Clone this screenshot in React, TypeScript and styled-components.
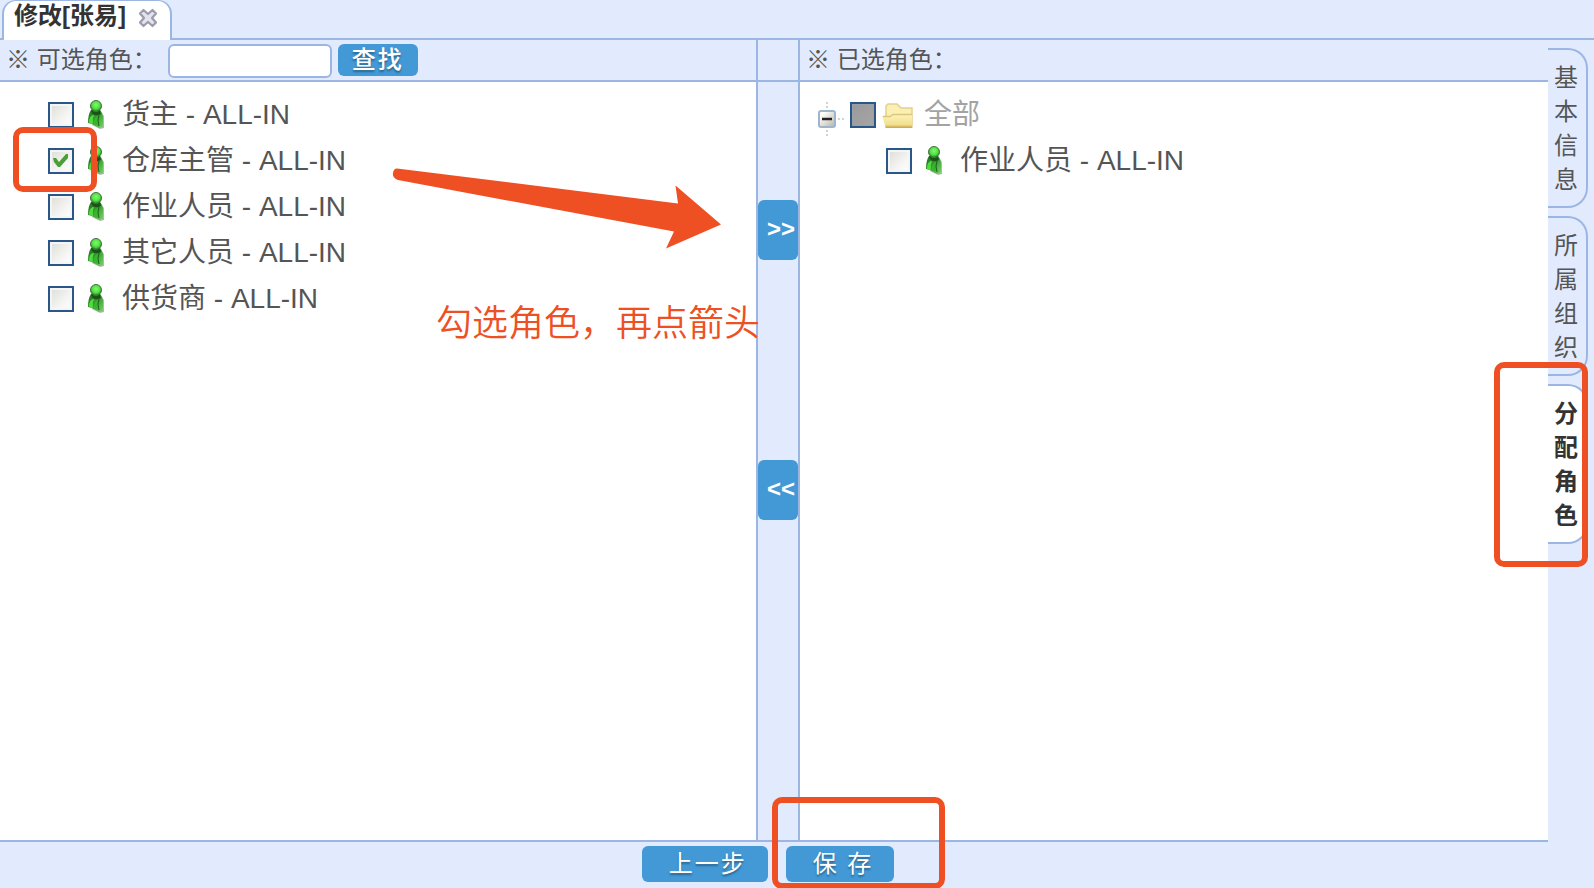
import React, { useState } from 'react';
import styled, { createGlobalStyle, css } from 'styled-components';

const color = {
  bar: '#e2ebfd',
  line: '#9cb6e4',
  button: '#4299d6',
  text: '#555555',
  strong: '#333333',
  mark: '#ee5024',
};

const GlobalStyle = createGlobalStyle`
  *, *::before, *::after { box-sizing: border-box; }
  body {
    margin: 0;
    background: ${color.bar};
    color: ${color.text};
    font-family: "Liberation Sans", "Noto Sans CJK SC", sans-serif;
    font-size: 24px;
  }
  button, input { font: inherit; }
`;

const Page = styled.div`
  display: flex;
  flex-direction: column;
  min-height: 100vh;
  overflow: hidden;
`;

const TabBar = styled.header`
  display: flex;
  height: 40px;
  padding-left: 2px;
  border-bottom: 2px solid ${color.line};
`;

const PageTab = styled.div`
  display: flex;
  align-items: flex-start;
  gap: 12px;
  height: 40px;
  padding: 0 12px 0 10px;
  border: 2px solid ${color.line};
  border-top-width: 1px;
  border-bottom: 0;
  border-radius: 14px 14px 0 0;
  background: #fff;
`;

const PageTitle = styled.h1`
  margin: 0;
  color: ${color.strong};
  font-size: 24px;
  font-weight: 700;
  line-height: 30px;
`;

const CloseButton = styled.button`
  display: flex;
  margin-top: 7px;
  padding: 0;
  border: 0;
  background: none;
`;

const Body = styled.div`
  display: flex;
  flex: 1;
`;

const Content = styled.div`
  display: flex;
  flex: 1;
  flex-direction: column;
  min-width: 0;
`;

const Columns = styled.main`
  display: grid;
  flex: 1;
  grid-template-columns: 189fr 44px 187fr;
  border-bottom: 2px solid ${color.line};
`;

const Panel = styled.section`
  display: flex;
  flex-direction: column;
  min-width: 0;
  background: #fff;
`;

const PanelHead = styled.div`
  display: flex;
  align-items: center;
  height: 42px;
  padding: 0 6px;
  border-bottom: 2px solid ${color.line};
  background: ${color.bar};
  line-height: 36px;
  white-space: pre;
`;

const SearchInput = styled.input`
  width: 164px;
  height: 34px;
  margin: 2px 6px 0 11px;
  padding: 0 6px;
  border: 2px solid ${color.line};
  border-radius: 6px;
  background: #fff;
  outline: 0;
`;

const Button = styled.button`
  height: 36px;
  padding: 0 21px 0 27px;
  border: 0;
  border-radius: 6px;
  background: ${color.button};
  color: #fff;
  letter-spacing: 2px;
  line-height: 36px;
  text-shadow: 0 2px 2px rgba(0, 0, 0, 0.35);
  white-space: nowrap;
`;

const SearchButton = styled(Button)`
  height: 32px;
  padding: 0 14px;
  font-weight: 500;
  line-height: 32px;
`;

const Transfer = styled.div`
  display: flex;
  flex-direction: column;
  border: solid ${color.line};
  border-width: 0 2px;
`;

const TransferHead = styled.div`
  height: 42px;
  border-bottom: 2px solid ${color.line};
`;

const TransferButtons = styled.div`
  display: flex;
  flex-direction: column;
  gap: 200px;
  padding-top: 118px;
`;

const MoveButton = styled.button`
  height: 60px;
  padding: 0 0 2px 9px;
  border: 0;
  border-radius: 6px;
  background: ${color.button};
  color: #fff;
  font-weight: 700;
  line-height: 58px;
  text-align: left;
`;

const Tree = styled.ul`
  position: relative;
  margin: 0;
  padding: 10px 0 0;
  list-style: none;
`;

const Row = styled.li<{ $indent: number }>`
  position: relative;
  display: flex;
  align-items: center;
  height: 46px;
  padding-left: ${(p) => p.$indent}px;
`;

const RowLabel = styled.label<{ $muted?: boolean }>`
  display: flex;
  align-items: center;
  gap: 10px;
  color: ${(p) => (p.$muted ? '#a3a3a3' : color.text)};
  font-size: 28px;
  line-height: 42px;
  white-space: nowrap;
`;

const Check = styled.input<{ $partial?: boolean }>`
  appearance: none;
  flex: none;
  width: 26px;
  height: 26px;
  margin: 0 6px 0 0;
  border: 2px solid #2b5688;
  background: linear-gradient(135deg, #dcdcd7, #f4f4f2 60%, #ffffff);
  box-shadow: inset 0 0 0 2px #f4f5f6;
  ${(p) =>
    p.$partial &&
    css`
      background: linear-gradient(135deg, #999, #a6a6a6);
      box-shadow: inset 0 0 0 1px #9aa0a8;
    `}
  &:checked::after {
    content: '';
    display: block;
    width: 22px;
    height: 22px;
    background: #4aa036;
    clip-path: polygon(3px 8px, 6px 8px, 9px 12px, 16px 4px, 18px 4px, 18px 8px, 10px 17px, 8px 17px, 4px 12px);
  }
`;

const IconSlot = styled.span`
  display: flex;
  width: 32px;
  height: 32px;
`;

const SideTabs = styled.nav`
  display: flex;
  flex-direction: column;
  gap: 8px;
  position: relative;
  width: 46px;
  padding: 8px 6px 0 0;
`;

const SideTab = styled.button<{ $active?: boolean }>`
  padding: 11px 8px 9px 6px;
  border: 2px solid ${color.line};
  border-left: 0;
  border-radius: 0 20px 20px 0;
  background: ${(p) => (p.$active ? '#fff' : color.bar)};
  color: ${(p) => (p.$active ? color.strong : color.text)};
  font-weight: ${(p) => (p.$active ? 700 : 400)};
  line-height: 34px;
  word-break: break-all;
`;

const Footer = styled.footer`
  display: flex;
  justify-content: center;
  gap: 18px;
  height: 46px;
  padding: 4px 12px 0 0;
`;

const SaveArea = styled.div`
  position: relative;
`;

const Mark = styled.span`
  position: absolute;
  z-index: 2;
  border: 6px solid ${color.mark};
  border-radius: 10px;
  pointer-events: none;
`;

const CheckMark = styled(Mark)`
  top: -11px;
  left: 13px;
  width: 84px;
  height: 65px;
`;

const SaveMark = styled(Mark)`
  top: -49px;
  left: -14px;
  width: 173px;
  height: 92px;
`;

const SideMark = styled(Mark)`
  top: 322px;
  right: 6px;
  width: 94px;
  height: 205px;
`;

const Arrow = styled.svg`
  position: absolute;
  z-index: 2;
  top: 82px;
  left: 390px;
  pointer-events: none;
`;

const Hint = styled.p`
  position: absolute;
  z-index: 2;
  top: 210px;
  left: 436px;
  margin: 0;
  color: ${color.mark};
  font-family: "Noto Sans CJK SC", sans-serif;
  font-size: 36px;
  font-weight: 350;
  line-height: 56px;
  white-space: nowrap;
`;

const CloseIcon = () => (
  <svg width="20" height="20" viewBox="0 0 20 20" aria-hidden="true">
    <path
      d="M5.500 2 10 6 14.500 2 18 5.500 14 10 18 14.500 14.500 18 10 14 5.500 18 2 14.500 6 10 2 5.500Z"
      fill="#e2e3ec"
      stroke="#9a9cac"
      strokeWidth="2.200"
      strokeLinejoin="round"
    />
  </svg>
);

const PersonIcon = () => (
  <svg width="32" height="32" viewBox="0 0 32 32" aria-hidden="true">
    <defs>
      <radialGradient id="head" cx="0.5" cy="0.4" r="0.6">
        <stop offset="0" stopColor="#7dfb6c" />
        <stop offset="0.6" stopColor="#4fe040" />
        <stop offset="1" stopColor="#217a1c" />
      </radialGradient>
      <linearGradient id="coat" x1="0" y1="0" x2="1" y2="1">
        <stop offset="0" stopColor="#1d6a1a" />
        <stop offset="0.5" stopColor="#35a02c" />
        <stop offset="1" stopColor="#7fd072" />
      </linearGradient>
    </defs>
    <path d="M11 12h9l4 5v12l-4 1-8-4z" fill="#7f887c" opacity="0.6" />
    <path d="M11 11h9q3 3 3 8v9l-4 1-7-4-4-1q0-9 3-13Z" fill="url(#coat)" />
    <path d="M11 11h9l1 4q-6 3-9-1Z" fill="#1b5218" />
    <path d="M9 24q0-8 5-8-2 4-1 9Z" fill="#4fdc40" />
    <path d="M14 25q-1-6 4-8-2 5 1 10Z" fill="#37b52c" />
    <path d="M19 16q-2 5 0 11" fill="none" stroke="#1f5f1b" strokeWidth="1" />
    <circle cx="16" cy="7" r="5.500" fill="url(#head)" stroke="#4a7046" strokeWidth="1" />
  </svg>
);

const FolderIcon = () => (
  <svg width="32" height="32" viewBox="0 0 32 32" aria-hidden="true">
    <defs>
      <linearGradient id="folder" x1="0" y1="0" x2="0" y2="1">
        <stop offset="0" stopColor="#fdf4bb" />
        <stop offset="0.75" stopColor="#f3e08f" />
        <stop offset="1" stopColor="#c9a348" />
      </linearGradient>
    </defs>
    <path d="M4 28V7l2-2h9l4 4h11v19Z" fill="#fbf0b4" stroke="#e3cf8c" strokeWidth="1.500" />
    <path d="M0 17h8l3-2h19v14H4Z" fill="url(#folder)" />
    <path d="M1 17.500h7l3-2h19" fill="none" stroke="#dcc67c" strokeWidth="1.500" />
  </svg>
);

const ExpanderButton = styled.button`
  display: flex;
  padding: 0;
  border: 0;
  background: none;
`;

const ExpanderIcon = () => (
  <svg width="40" height="46" viewBox="0 0 40 46" aria-hidden="true">
    <defs>
      <linearGradient id="knob" x1="0" y1="0" x2="1" y2="1">
        <stop offset="0.2" stopColor="#ffffff" />
        <stop offset="1" stopColor="#b9b0a2" />
      </linearGradient>
    </defs>
    <path d="M17 10v6M17 38v6M28 27h6" stroke="#d2d2d2" strokeWidth="2" strokeDasharray="2 2" />
    <rect x="9" y="19" width="16" height="16" rx="2" fill="url(#knob)" stroke="#9db6cd" strokeWidth="2" />
    <path d="M12 27h10" stroke="#222" strokeWidth="2.500" />
  </svg>
);

const available = ['货主', '仓库主管', '作业人员', '其它人员', '供货商'];

export default function App() {
  const [checked, setChecked] = useState<string[]>(['仓库主管']);
  const toggle = (name: string) =>
    setChecked((list) => (list.includes(name) ? list.filter((n) => n !== name) : [...list, name]));

  return (
    <Page>
      <GlobalStyle />
      <TabBar>
        <PageTab>
          <PageTitle>修改[张易]</PageTitle>
          <CloseButton type="button" aria-label="关闭">
            <CloseIcon />
          </CloseButton>
        </PageTab>
      </TabBar>
      <Body>
        <Content>
          <Columns>
            <Panel>
              <PanelHead>
                <label htmlFor="role-search">※ 可选角色：</label>
                <SearchInput id="role-search" type="text" />
                <SearchButton type="button">查找</SearchButton>
              </PanelHead>
              <Tree>
                {available.map((name, i) => (
                  <Row key={name} $indent={48}>
                    <Check
                      type="checkbox"
                      id={`role-${i}`}
                      checked={checked.includes(name)}
                      onChange={() => toggle(name)}
                    />
                    <RowLabel htmlFor={`role-${i}`}>
                      <IconSlot>
                        <PersonIcon />
                      </IconSlot>
                      {name} - ALL-IN
                    </RowLabel>
                    {i === 1 && <CheckMark />}
                  </Row>
                ))}
                <Hint as="li">勾选角色，再点箭头</Hint>
                <li aria-hidden="true">
                  <Arrow width="336" height="90" viewBox="0 0 336 90">
                    <path
                      d="M7 4.500 288 39.500 285.500 21.500 331 60.500 276 84.500 284 67.500 8 16Q2 14 3 9 3.500 4.500 7 4.500Z"
                      fill={color.mark}
                    />
                  </Arrow>
                </li>
              </Tree>
            </Panel>
            <Transfer>
              <TransferHead />
              <TransferButtons>
                <MoveButton type="button">&gt;&gt;</MoveButton>
                <MoveButton type="button">&lt;&lt;</MoveButton>
              </TransferButtons>
            </Transfer>
            <Panel>
              <PanelHead>※ 已选角色：</PanelHead>
              <Tree>
                <Row $indent={10}>
                  <ExpanderButton type="button" aria-label="折叠">
                    <ExpanderIcon />
                  </ExpanderButton>
                  <Check type="checkbox" id="role-all" $partial />
                  <RowLabel htmlFor="role-all" $muted>
                    <IconSlot>
                      <FolderIcon />
                    </IconSlot>
                    全部
                  </RowLabel>
                </Row>
                <Row $indent={86}>
                  <Check type="checkbox" id="role-worker" />
                  <RowLabel htmlFor="role-worker">
                    <IconSlot>
                      <PersonIcon />
                    </IconSlot>
                    作业人员 - ALL-IN
                  </RowLabel>
                </Row>
              </Tree>
            </Panel>
          </Columns>
          <Footer>
            <Button type="button">上一步</Button>
            <SaveArea>
              <Button type="button">保 存</Button>
              <SaveMark />
            </SaveArea>
          </Footer>
        </Content>
        <SideTabs>
          <SideTab type="button">基本信息</SideTab>
          <SideTab type="button">所属组织</SideTab>
          <SideTab type="button" $active>
            分配角色
          </SideTab>
          <SideMark />
        </SideTabs>
      </Body>
    </Page>
  );
}
